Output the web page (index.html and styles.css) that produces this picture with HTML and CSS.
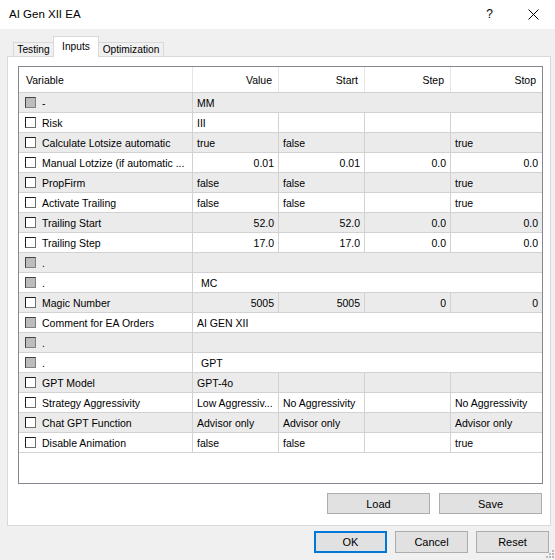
FILE: index.html
```html
<!DOCTYPE html>
<html lang="en">
<head>
  <meta charset="UTF-8">
  <title>AI Gen XII EA</title>
  <link rel="stylesheet" href="styles.css">
</head>
<body>
  <!-- Title bar -->
  <div class="titlebar">
    <span class="title">AI Gen XII EA</span>
    <span class="help">?</span>
    <svg class="close" width="11" height="11" viewBox="0 0 11 11">
      <path d="M0.5 0.5 L10.5 10.5 M10.5 0.5 L0.5 10.5" stroke="#000" stroke-width="1" fill="none"/>
    </svg>
  </div>

  <!-- Tabs -->
  <div class="tabs">
    <div class="tab tab-testing">Testing</div>
    <div class="tab tab-inputs active">Inputs</div>
    <div class="tab tab-opt">Optimization</div>
  </div>

  <div class="panel">
    <div class="grid">
      <div class="row header">
        <div class="cell head-var">Variable</div>
        <div class="cell num">Value</div>
        <div class="cell num">Start</div>
        <div class="cell num">Step</div>
        <div class="cell num">Stop</div>
      </div>

      <div class="rows">
        <div class="row">
          <div class="cell var"><span class="cb off"></span>-</div>
          <div class="cell span">MM</div>
        </div>
        <div class="row">
          <div class="cell var"><span class="cb"></span>Risk</div>
          <div class="cell">III</div><div class="cell"></div><div class="cell"></div><div class="cell"></div>
        </div>
        <div class="row">
          <div class="cell var"><span class="cb"></span>Calculate Lotsize automatic</div>
          <div class="cell">true</div><div class="cell">false</div><div class="cell"></div><div class="cell">true</div>
        </div>
        <div class="row">
          <div class="cell var"><span class="cb"></span>Manual Lotzize (if automatic ...</div>
          <div class="cell num">0.01</div><div class="cell num">0.01</div><div class="cell num">0.0</div><div class="cell num">0.0</div>
        </div>
        <div class="row">
          <div class="cell var"><span class="cb"></span>PropFirm</div>
          <div class="cell">false</div><div class="cell">false</div><div class="cell"></div><div class="cell">true</div>
        </div>
        <div class="row">
          <div class="cell var"><span class="cb"></span>Activate Trailing</div>
          <div class="cell">false</div><div class="cell">false</div><div class="cell"></div><div class="cell">true</div>
        </div>
        <div class="row">
          <div class="cell var"><span class="cb"></span>Trailing Start</div>
          <div class="cell num">52.0</div><div class="cell num">52.0</div><div class="cell num">0.0</div><div class="cell num">0.0</div>
        </div>
        <div class="row">
          <div class="cell var"><span class="cb"></span>Trailing Step</div>
          <div class="cell num">17.0</div><div class="cell num">17.0</div><div class="cell num">0.0</div><div class="cell num">0.0</div>
        </div>
        <div class="row">
          <div class="cell var"><span class="cb off"></span>.</div>
          <div class="cell span"></div>
        </div>
        <div class="row">
          <div class="cell var"><span class="cb off"></span>.</div>
          <div class="cell span group">MC</div>
        </div>
        <div class="row">
          <div class="cell var"><span class="cb"></span>Magic Number</div>
          <div class="cell num">5005</div><div class="cell num">5005</div><div class="cell num">0</div><div class="cell num">0</div>
        </div>
        <div class="row">
          <div class="cell var"><span class="cb off"></span>Comment for EA Orders</div>
          <div class="cell span">AI GEN XII</div>
        </div>
        <div class="row">
          <div class="cell var"><span class="cb off"></span>.</div>
          <div class="cell span"></div>
        </div>
        <div class="row">
          <div class="cell var"><span class="cb off"></span>.</div>
          <div class="cell span group">GPT</div>
        </div>
        <div class="row">
          <div class="cell var"><span class="cb"></span>GPT Model</div>
          <div class="cell">GPT-4o</div><div class="cell"></div><div class="cell"></div><div class="cell"></div>
        </div>
        <div class="row">
          <div class="cell var"><span class="cb"></span>Strategy Aggressivity</div>
          <div class="cell">Low Aggressiv...</div><div class="cell">No Aggressivity</div><div class="cell"></div><div class="cell">No Aggressivity</div>
        </div>
        <div class="row">
          <div class="cell var"><span class="cb"></span>Chat GPT Function</div>
          <div class="cell">Advisor only</div><div class="cell">Advisor only</div><div class="cell"></div><div class="cell">Advisor only</div>
        </div>
        <div class="row">
          <div class="cell var"><span class="cb"></span>Disable Animation</div>
          <div class="cell">false</div><div class="cell">false</div><div class="cell"></div><div class="cell">true</div>
        </div>
      </div>
    </div>

    <div class="panel-buttons">
      <button class="btn wide">Load</button>
      <button class="btn wide">Save</button>
    </div>
  </div>

  <!-- Dialog buttons -->
  <div class="footer">
    <button class="btn default">OK</button>
    <button class="btn">Cancel</button>
    <button class="btn">Reset</button>
  </div>

  <svg class="grip" width="8" height="8" viewBox="0 0 8 8">
    <rect x="6" y="0" width="2" height="2" fill="#b8b8b8"/>
    <rect x="3" y="3" width="2" height="2" fill="#b8b8b8"/>
    <rect x="6" y="3" width="2" height="2" fill="#b8b8b8"/>
    <rect x="0" y="6" width="2" height="2" fill="#b8b8b8"/>
    <rect x="3" y="6" width="2" height="2" fill="#b8b8b8"/>
    <rect x="6" y="6" width="2" height="2" fill="#b8b8b8"/>
  </svg>
</body>
</html>
```

FILE: styles.css
```css
* {
  box-sizing: border-box;
}

body {
  margin: 0;
  width: 555px;
  height: 560px;
  position: relative;
  overflow: hidden;
  background-color: #f0f0f0;
  color: #000;
  font-family: "Liberation Sans", Arial, sans-serif;
  font-size: 10.5px;
}

/* Title bar */
.titlebar {
  height: 29px;
  background-color: #fff;
  display: flex;
  align-items: center;
  padding: 0 16px 1px 9px;
  font-size: 11.5px;
}

.title {
  flex: 1;
}

.help {
  font-size: 12px;
  margin-right: 35px;
}

/* Tabs */
.tabs {
  height: 27px;
  display: flex;
  align-items: flex-end;
  padding: 7px 0 0 13px;
  font-size: 10.2px;
}

.tab {
  height: 14px;
  border: 1px solid #d9d9d9;
  border-bottom: none;
  background-color: #f0f0f0;
  display: flex;
  align-items: center;
  justify-content: center;
}

.tab-testing {
  width: 40px;
  border-right: none;
}

.tab-inputs {
  width: 46px;
}

.tab-opt {
  width: 65px;
  border-left: none;
}

.tab.active {
  height: 21px;
  margin-bottom: -1px;
  background-color: #fff;
  align-items: flex-end;
  padding-bottom: 5px;
  position: relative;
  z-index: 1;
}

/* Panel */
.panel {
  margin: 0 4px 0 7px;
  background-color: #fff;
  border: 1px solid #d9d9d9;
  padding: 9px 7px 11px 10px;
}

.grid {
  height: 418px;
  border: 1px solid #828790;
  background-color: #fff;
}

.row {
  display: grid;
  grid-template-columns: 174px 86px 86px 86px 1fr;
  height: 20px;
  border-bottom: 1px solid #d2d2d2;
}

.rows .row:nth-child(odd) {
  background-color: #ebebeb;
}

.cell {
  display: flex;
  align-items: center;
  padding: 0 4px;
  border-right: 1px solid #d2d2d2;
  white-space: nowrap;
  overflow: hidden;
}

.cell:last-child {
  border-right: none;
}

.num {
  justify-content: flex-end;
}

.span {
  grid-column: 2 / -1;
}

.group {
  padding-left: 8px;
}

.header {
  height: 26px;
}

.header .cell {
  border-right-color: #e5e5e5;
  padding-right: 6px;
}

.head-var {
  padding-left: 7px;
}

.var {
  padding-left: 6px;
  gap: 6px;
}

/* Checkbox */
.cb {
  width: 11px;
  height: 11px;
  flex: none;
  background-color: #fff;
  border: 1px solid;
  border-color: #1e1e1e #6e6e6e #6e6e6e #1e1e1e;
}

.cb.off {
  background-color: #bcbcbc;
  border-color: #444 #808080 #808080 #444;
}

/* Buttons */
.panel-buttons {
  display: flex;
  justify-content: flex-end;
  gap: 9px;
  margin: 9px 1px 0 0;
}

.btn {
  height: 21px;
  width: 73px;
  padding: 0;
  background-color: #e1e1e1;
  border: 1px solid #adadad;
  font-family: "Liberation Sans", Arial, sans-serif;
  font-size: 11px;
  color: #000;
}

.btn.wide {
  width: 103px;
}

.btn.default {
  border: 2px solid #0078d7;
}

.footer {
  display: flex;
  justify-content: flex-end;
  gap: 8px;
  padding: 5px 6px 0 0;
}

.footer .btn {
  height: 22px;
}

.grip {
  position: absolute;
  right: 1px;
  bottom: 2px;
}
```
